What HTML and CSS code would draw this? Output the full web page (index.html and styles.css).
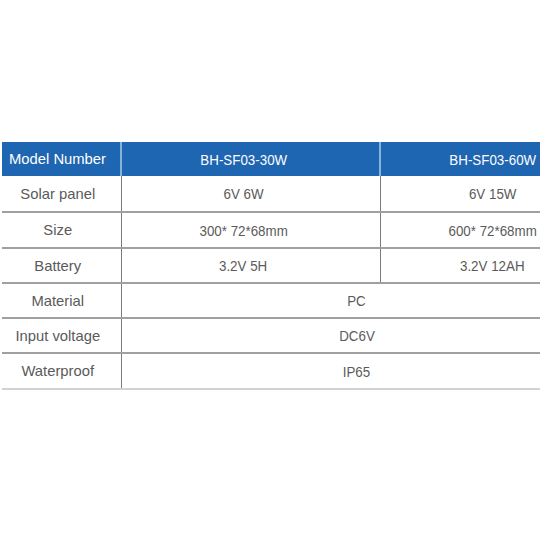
FILE: index.html
```html
<!DOCTYPE html>
<html>
<head>
<meta charset="utf-8">
<link rel="stylesheet" href="styles.css">
</head>
<body>
<div class="wrap">
<div class="clip">
<table class="spec">
  <colgroup>
    <col class="c1"><col class="c2"><col class="c3">
  </colgroup>
  <tr class="head">
    <th class="k">Model Number</th>
    <th class="v"><span class="t">BH-SF03-30W</span></th>
    <th class="v"><span class="t">BH-SF03-60W</span></th>
  </tr>
  <tr class="r36">
    <td class="k">Solar panel</td>
    <td class="v"><span class="t">6V 6W</span></td>
    <td class="v"><span class="t">6V 15W</span></td>
  </tr>
  <tr class="r36">
    <td class="k">Size</td>
    <td class="v"><span class="t">300* 72*68mm</span></td>
    <td class="v"><span class="t">600* 72*68mm</span></td>
  </tr>
  <tr class="r35">
    <td class="k">Battery</td>
    <td class="v"><span class="t">3.2V 5H</span></td>
    <td class="v"><span class="t">3.2V 12AH</span></td>
  </tr>
  <tr class="r35">
    <td class="k">Material</td>
    <td class="v span" colspan="2"><span class="t">PC</span></td>
  </tr>
  <tr class="r35">
    <td class="k">Input voltage</td>
    <td class="v span" colspan="2"><span class="t">DC6V</span></td>
  </tr>
  <tr class="r36 last">
    <td class="k">Waterproof</td>
    <td class="v span" colspan="2"><span class="t">IP65</span></td>
  </tr>
</table>
</div>
</div>
</body>
</html>
```
FILE: styles.css
```css
html, body {
  margin: 0;
  padding: 0;
  background: #ffffff;
}

.wrap {
  padding: 142px 0 0 2px;
}

.clip {
  width: 538px;
  overflow: hidden;
}

.spec {
  border-collapse: collapse;
  width: 616px;
  table-layout: fixed;
  font-family: "Liberation Sans", Arial, sans-serif;
  color: #5a5a5a;
}

.c1 { width: 119px; }
.c2 { width: 259px; }
.c3 { width: 238px; }

.spec th,
.spec td {
  text-align: center;
  vertical-align: middle;
  white-space: nowrap;
}

.spec .k {
  font-size: 14.8px;
  padding: 0 7px 0 0;
}

.spec .v {
  font-size: 15px;
  padding: 0 14px 0 0;
}

.spec .t {
  display: inline-block;
  transform: scaleX(0.89);
}

.spec .span {
  padding-right: 26px;
}

.head {
  height: 34px;
  background: #1e65b2;
}

.head th {
  color: #ffffff;
  font-weight: normal;
  border-left: 2px solid #86b3d6;
}

.head th:first-child {
  border-left: none;
}

.spec td {
  border-left: 1px solid #7a7a7a;
  border-bottom: 2px solid #a0a0a0;
}

.spec td:first-child {
  border-left: none;
}

.r36 { height: 36px; }
.r35 { height: 35px; }

.last td {
  border-bottom: 2px solid #d2d2d2;
}
```
